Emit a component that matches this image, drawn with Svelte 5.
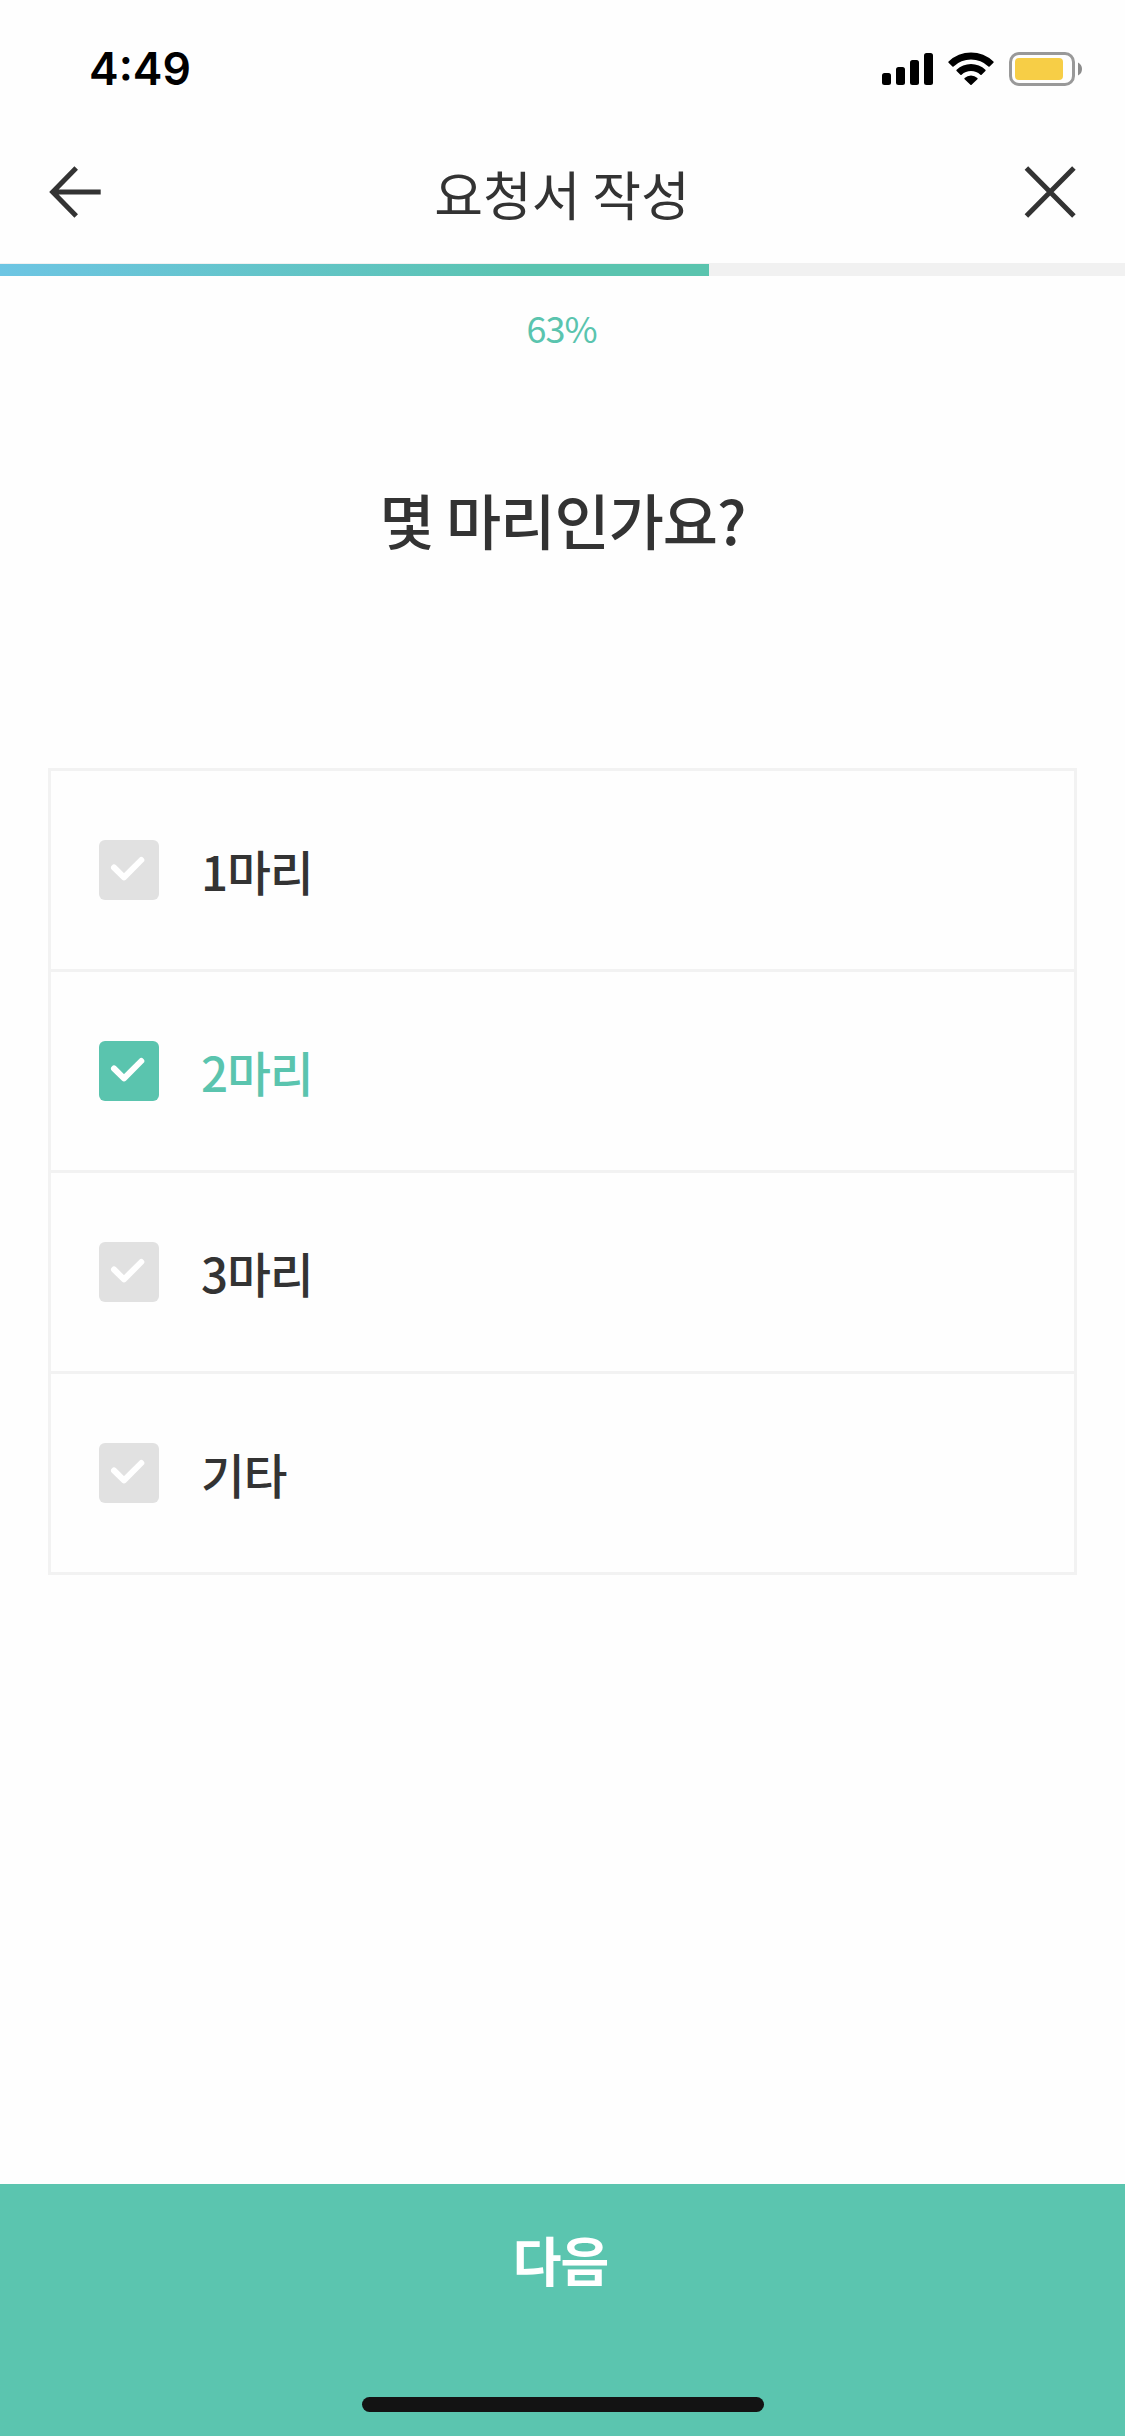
<script lang="ts">
	let progress = 63;
	let options = ['1마리', '2마리', '3마리', '기타'];
	let selected = 1;
</script>

<div class="screen">
	<div class="status">
		<span class="time">4:49</span>
		<div class="indicators">
			<svg class="signal" width="51" height="34" viewBox="0 0 51 34">
				<rect x="0" y="21" width="9" height="12" rx="2.5" />
				<rect x="14" y="15" width="9" height="18" rx="2.5" />
				<rect x="28" y="8" width="9" height="25" rx="2.5" />
				<rect x="42" y="1" width="9" height="32" rx="2.5" />
			</svg>
			<svg class="wifi" width="46" height="34" viewBox="0 0 46 34">
				<path d="M0.6 9.6A32 32 0 0 1 45.4 9.6Q46 10.2 45.4 10.8L41.6 14.4Q41 15 40.4 14.4A25.2 25.2 0 0 0 5.6 14.4Q5 15 4.4 14.4L0.6 10.8Q0 10.2 0.6 9.6Z" />
				<path d="M8.6 17.8A20.6 20.6 0 0 1 37.4 17.8Q38 18.5 37.4 19.1L33.6 22.7Q33 23.2 32.4 22.7A13.9 13.9 0 0 0 13.6 22.7Q13 23.2 12.4 22.7L8.6 19.1Q8 18.5 8.6 17.8Z" />
				<path d="M16.6 26A9.4 9.4 0 0 1 29.4 26Q30 26.6 29.4 27.2L23.6 32.7Q23 33.3 22.4 32.7L16.6 27.2Q16 26.6 16.6 26Z" />
			</svg>
			<svg class="battery" width="73" height="34" viewBox="0 0 73 34">
				<rect x="1.5" y="1.5" width="63" height="31" rx="8.5" fill="none" stroke="#999" stroke-width="3" />
				<rect x="6" y="6" width="48" height="22" rx="4" fill="#f7ce46" />
				<path d="M69 10.5Q73 12.5 73 17T69 23.5Z" fill="#8c8c8c" />
			</svg>
		</div>
	</div>

	<header class="nav">
		<button aria-label="뒤로">
			<svg width="54" height="54" viewBox="0 0 54 54">
				<path d="M28.2 3L4.7 27L28.2 51M5 27H52.7" />
			</svg>
		</button>
		<h1>요청서 작성</h1>
		<button aria-label="닫기">
			<svg width="54" height="54" viewBox="0 0 54 54">
				<path d="M3.4 3.1L50.9 50.9M50.9 3.1L3.4 50.9" />
			</svg>
		</button>
	</header>

	<div class="track">
		<div class="fill" style="width: {progress}%"></div>
	</div>
	<p class="percent">{progress}%</p>

	<h2>몇 마리인가요?</h2>

	<ul class="options">
		{#each options as option, i}
			<li class:selected={selected === i}>
				<button on:click={() => (selected = i)}>
					<svg class="check" width="60" height="60" viewBox="0 0 60 60">
						<rect width="60" height="60" rx="6" />
						<path d="M15 27.5L25 37.3L42.3 20" />
					</svg>
					<span>{option}</span>
				</button>
			</li>
		{/each}
	</ul>

	<footer>
		<button class="next">다음</button>
		<div class="home"></div>
	</footer>
</div>

<style>
	:global(body) { margin: 0; background: #fefefe; }
	.screen {
		display: flex;
		flex-direction: column;
		width: 1125px;
		height: 2436px;
		background: #fefefe;
		color: #333;
		font-family: 'Noto Sans CJK KR', sans-serif;
	}
	button { padding: 0; border: 0; background: none; color: inherit; font: inherit; cursor: pointer; }
	h1, h2, p, ul { margin: 0; padding: 0; }
	svg { display: block; }

	.status {
		display: flex;
		justify-content: space-between;
		align-items: center;
		box-sizing: border-box;
		height: 138px;
		padding: 0 43px 0 89px;
		color: #000;
	}
	.time { font: 600 44.5px/54px Inter, sans-serif; }
	.indicators { display: flex; }
	.wifi { margin-left: 15px; }
	.battery { margin-left: 15px; }

	.nav {
		display: flex;
		justify-content: space-between;
		align-items: center;
		box-sizing: border-box;
		height: 125px;
		padding: 0 48px 17px;
	}
	.nav path { fill: none; stroke: #333; stroke-width: 5; }
	h1 { font-size: 53px; line-height: 80px; font-weight: 400; padding: 1px 1px 0 0; }

	.track { height: 12px; padding-top: 1px; background: #f1f1f1; }
	.fill { height: 12px; background: linear-gradient(90deg, #6dc5e3, #5ac4b0 75%, #5ac4ae); }
	.percent { margin-top: 24px; padding-right: 2px; font-size: 36px; line-height: 54px; text-align: center; color: #5ac4ae; letter-spacing: -1px; }

	h2 { margin-top: 120px; height: 90px; font-size: 60px; line-height: 90px; font-weight: 500; text-align: center; letter-spacing: -1px; }

	.options { margin: 204px 48px 0; border: 3px solid #f2f2f2; list-style: none; }
	li + li { border-top: 3px solid #f2f2f2; }
	li button { display: flex; align-items: center; width: 100%; height: 198px; padding-left: 48px; }
	li span { margin-left: 42px; padding-top: 2px; font-size: 47.5px; line-height: 72px; font-weight: 500; letter-spacing: -0.9px; }
	.check rect { fill: #e1e1e1; }
	.check path { fill: none; stroke: #fff; stroke-width: 6; stroke-linecap: round; stroke-linejoin: round; }
	.selected { color: #5ac4ae; }
	.selected .check rect { fill: #5ac4ae; }

	footer {
		display: flex;
		flex-direction: column;
		align-items: center;
		justify-content: space-between;
		box-sizing: border-box;
		height: 252px;
		margin-top: auto;
		padding: 35px 0 24px;
		background: #5bc5af;
	}
	.next { padding-right: 4px; color: #fff; font-size: 53px; line-height: 80px; font-weight: 700; letter-spacing: -1px; }
	.home { width: 402px; height: 15px; border-radius: 8px; background: #131313; }
</style>
